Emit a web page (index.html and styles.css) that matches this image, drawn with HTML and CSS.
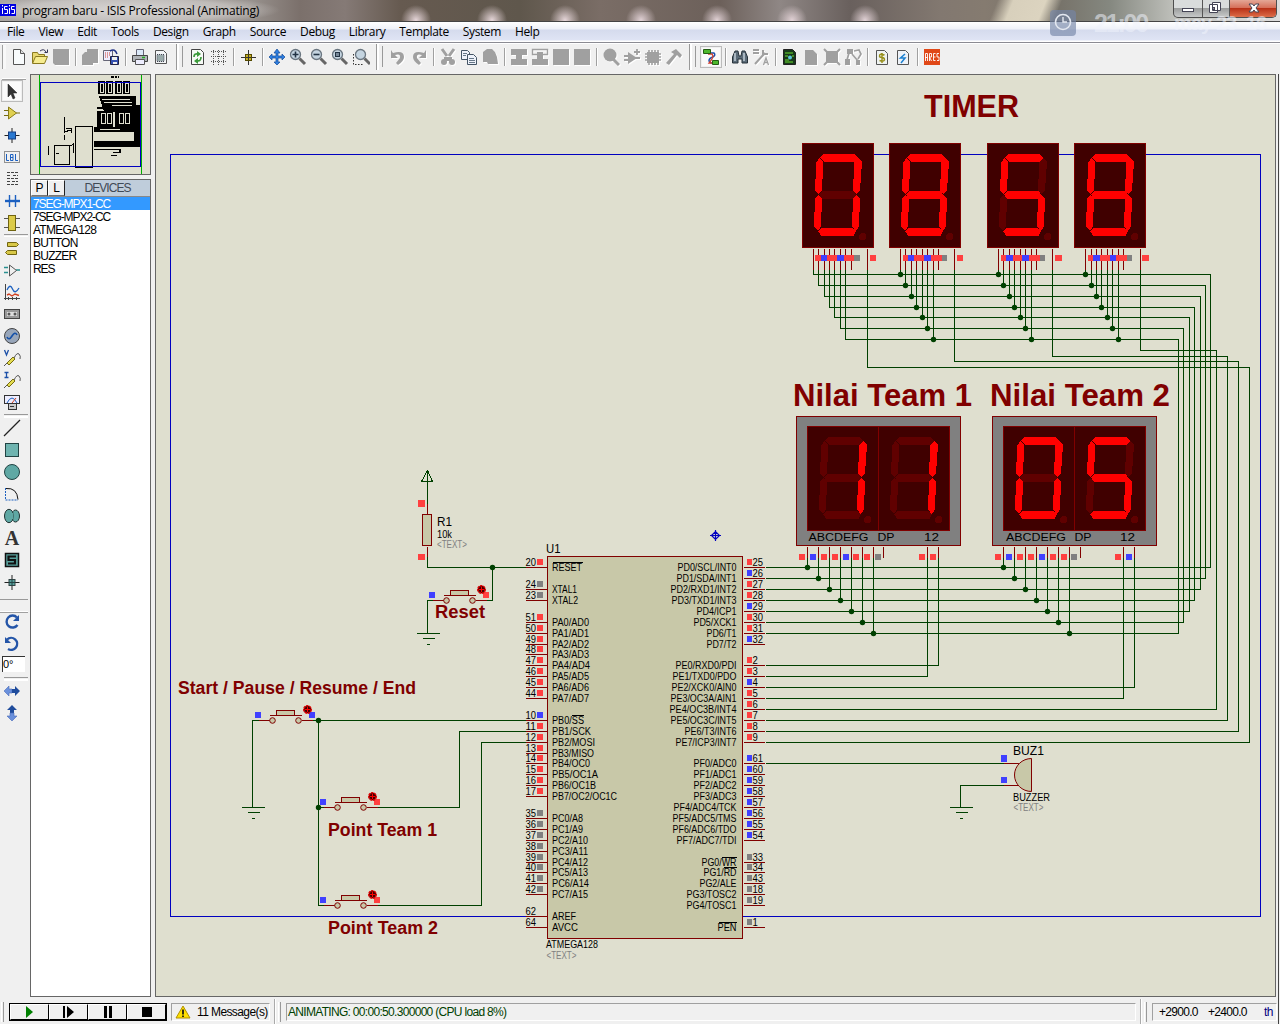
FILE: index.html
```html
<!DOCTYPE html>
<html lang="en">
<head>
<meta charset="utf-8">
<title>program baru - ISIS Professional (Animating)</title>
<link rel="stylesheet" href="styles.css">
</head>
<body>
<div class="window">
  <header class="titlebar">
    <svg class="app-icon" width="16" height="12" viewBox="0 0 16 12"><rect width="16" height="12" fill="#0000e0"/><path d="M2.500 4v6M2.500 1v1.500M7.500 2.500h-3v3h3v4h-3M9.500 4v6M9.500 1v1.500M14.500 2.500h-3v3h3v4h-3" stroke="#fff" fill="none"/></svg>
    <span class="title">program baru - ISIS Professional (Animating)</span>
    <div class="controls">
      <span class="ctl"><svg width="28" height="17"><rect x="8.500" y="8.500" width="11" height="3" fill="#fff" stroke="#445"/></svg></span>
      <span class="ctl"><svg width="26" height="17"><path d="M9.500 2.500h8v8h-8zM6.500 4.500h8v8h-8z" fill="#fff" stroke="#445"/><rect x="9.500" y="7.500" width="2" height="2" fill="#889" stroke="#445"/></svg></span>
      <span class="ctl close"><svg width="46" height="17"><path d="M19 4h3.500l1.500 2 1.500-2H29l-3 4 3 4h-3.500L24 10l-1.500 2H19l3-4z" fill="#fff" stroke="#445"/></svg></span>
    </div>
    <div class="clock">
      <svg width="26" height="26" viewBox="0 0 26 26"><rect width="26" height="26" rx="4" fill="#7486a8" opacity=".65"/><circle cx="13" cy="12" r="7.500" fill="none" stroke="#e4e8f0" stroke-width="1.600"/><path d="M13 7v5h4" fill="none" stroke="#e4e8f0" stroke-width="1.400"/></svg>
      <span class="time">21:00</span><span class="date">may 23&nbsp; 16</span>
    </div>
  </header>

  <nav class="menu"><span>File</span><span>View</span><span>Edit</span><span>Tools</span><span>Design</span><span>Graph</span><span>Source</span><span>Debug</span><span>Library</span><span>Template</span><span>System</span><span>Help</span></nav>

  <div class="toolbar">
    <i class="lead"></i>
    <svg viewBox="0 0 18 18"><path d="M3.500 1.500h7l4 4v11h-11z" fill="#f8fbfc" stroke="#555"/><path d="M10.500 1.500v4h4" fill="#ddd" stroke="#555"/></svg>
    <svg viewBox="0 0 18 18"><path d="M1.500 15V4.500h5l1 2h6V9" fill="#e8d870" stroke="#8a7a20"/><path d="M1.500 15.500l3-7h12l-3 7z" fill="#f6ec90" stroke="#8a7a20"/><path d="M9 3q4-3 6 1M16.500 1.500v3h-3" fill="none" stroke="#335"/></svg>
    <svg viewBox="0 0 18 18" class="off"><path d="M1 1h16v16H3l-2-2z"/></svg>
    <i class="sep"></i>
    <svg viewBox="0 0 18 18" class="off"><path d="M6 1h11v14h-5v2H1V7l3-3h2z"/></svg>
    <svg viewBox="0 0 18 18"><path d="M1.500 2.500h9v10h-9z" fill="#eef" stroke="#667"/><path d="M3 5h5M3 7h5M3 9h4" stroke="#c43" stroke-dasharray="1 1"/><path d="M8 3q5-3 7 3" fill="none" stroke="#238" stroke-width="1.500"/><path d="M8.500 8.500h8v8h-8z" fill="#3450b0" stroke="#224"/><path d="M10 9h5v3h-5zM11 14h4v2h-4z" fill="#eee"/></svg>
    <i class="sep"></i>
    <svg viewBox="0 0 18 18"><path d="M5.500 7V1.500h7V7" fill="#dbe9f8" stroke="#667"/><path d="M1.500 7.500h15v6h-15z" fill="#b0b4b8" stroke="#444"/><path d="M4.500 11.500h9v5h-9z" fill="#eef" stroke="#555"/><path d="M11 9.500h3" stroke="#2a2" stroke-width="1.500"/></svg>
    <svg viewBox="0 0 18 18"><path d="M3.500 2.500h8l3 3v10h-11z" fill="#f4f6f8" stroke="#555"/><path d="M5 6.500h7v7H5z" fill="#9aa" stroke="#445" stroke-dasharray="1 1"/></svg>
    <i class="grip"></i>
    <svg viewBox="0 0 18 18"><path d="M2.500 1.500h9l3 3v12h-12z" fill="#f6faf6" stroke="#444"/><path d="M5 9q0-4 4.500-3M12 9q0 5-4.500 3.500" fill="none" stroke="#3a9a3a" stroke-width="1.700"/><path d="M8 3l4 3-4 3zM9 10v6l-4-3z" fill="#3a9a3a"/></svg>
    <svg viewBox="0 0 18 18"><path d="M1 3.500h16M1 8.500h16M1 13.500h16M3.500 2v15M8.500 2v15M13.500 2v15" stroke="#555" stroke-dasharray="1 1"/></svg>
    <i class="sep"></i>
    <svg viewBox="0 0 18 18"><path d="M9.500 2v15M2 9.500h15" stroke="#333"/><rect x="6.500" y="6.500" width="6" height="6" fill="#c8b020" stroke="#554a00"/><path d="M9.500 7v5M7 9.500h5" stroke="#333"/></svg>
    <i class="sep"></i>
    <svg viewBox="0 0 18 18"><path d="M9 1l3 4h-2v3h4V6l3 3-3 3v-2h-4v4h2l-3 3-3-3h2v-4H4v2L1 9l3-3v2h4V5H6z" fill="#2f7fe0" stroke="#124a9a" stroke-width=".7"/></svg>
    <svg viewBox="0 0 18 18"><use href="#glass"/><path d="M3.500 6.500h6M6.500 3.500v6" stroke="#234" stroke-width="1.600"/></svg>
    <svg viewBox="0 0 18 18"><use href="#glass"/><path d="M3.500 6.500h6" stroke="#234" stroke-width="1.600"/></svg>
    <svg viewBox="0 0 18 18"><use href="#glass"/><rect x="4.500" y="4.500" width="4" height="4" fill="#789" stroke="#234"/></svg>
    <svg viewBox="0 0 18 18"><path d="M1.500 6v10.500h9" fill="none" stroke="#333" stroke-dasharray="1.500 1.500"/><g transform="translate(2)"><use href="#glass"/></g></svg>
    <i class="grip"></i>
    <svg viewBox="0 0 18 18" class="off"><path d="M2 2v8h7L6 7q6-2 5 3l-4 5 2 2q6-4 6-8 0-7-11-4z"/></svg>
    <svg viewBox="0 0 18 18" class="off"><path d="M16 2v8H9l3-3q-6-2-5 3l4 5-2 2q-6-4-6-8 0-7 11-4z"/></svg>
    <i class="sep"></i>
    <svg viewBox="0 0 18 18" class="off"><path d="M3 1l5 7M15 1l-5 7" stroke="#a0a0a0" stroke-width="3"/><path d="M5 9h8v4H5z"/><circle cx="5" cy="14" r="3"/><circle cx="13" cy="14" r="3"/></svg>
    <svg viewBox="0 0 18 18"><path d="M1.500 2.500h6l2 2v7h-8z" fill="#eef2fa" stroke="#456"/><path d="M7.500 6.500h6l3 3v7h-9z" fill="#eef2fa" stroke="#456"/><path d="M3 5.500h4M3 7.500h3M9 10.500h5M9 12.500h6M9 14.500h6" stroke="#678"/></svg>
    <svg viewBox="0 0 18 18" class="off"><path d="M2 4l4-3h5l3 3 2 5 1 7H7l-1-2H2z"/></svg>
    <i class="sep"></i>
    <svg viewBox="0 0 18 18" class="off"><path d="M1 1h16v6h-5v4h5v6H1v-6h5V7H1z"/></svg>
    <svg viewBox="0 0 18 18" class="off"><path d="M1.500 1.500h15v5h-15z" fill="none" stroke="#a0a0a0" stroke-width="1.400"/><path d="M6 4h6v7h5v6H1v-6h5z"/></svg>
    <svg viewBox="0 0 18 18" class="off"><path d="M1 1h16v16H1z"/></svg>
    <svg viewBox="0 0 18 18" class="off"><path d="M1 1h16v16H1z"/></svg>
    <i class="sep"></i>
    <svg viewBox="0 0 18 18" class="off"><circle cx="8" cy="7" r="6.500"/><path d="M11 11l6 6" stroke="#a0a0a0" stroke-width="3"/></svg>
    <svg viewBox="0 0 18 18" class="off"><path d="M5 4l9 6-9 6z"/><path d="M1 8h5M1 12h5M12 10h5M11 4h6M14 1v6" stroke="#a0a0a0" stroke-width="1.800"/></svg>
    <svg viewBox="0 0 18 18" class="off"><path d="M3 4h12v11H3z"/><path d="M1 6h16M1 9h16M1 12h16M5 2v15M8 2v15M11 2v15M14 2v15" stroke="#a0a0a0" stroke-width="1.600"/></svg>
    <svg viewBox="0 0 18 18" class="off"><path d="M6 4l5-3 6 6-2 3-3-3L4 17l-3-2 8-9z"/></svg>
    <i class="grip"></i>
    <svg viewBox="0 0 18 18" class="pressed"><path d="M5 5h7q2 2-1 4-4 1-4 4l2 2h6" fill="none" stroke="#1a50b0" stroke-width="1.500"/><path d="M6 6h4l1 2-1 3-3 4h6" fill="none" stroke="#d04030" stroke-width="1.300"/><path d="M1.500 1.500h7v4h-7zM10.500 12.500h6v4h-6z" fill="#4cb82c" stroke="#245c14"/></svg>
    <i class="sep"></i>
    <svg viewBox="0 0 18 18"><path d="M4 3h3l1 5h2l1-5h3l2.500 6v6h-5.500v-4H7v4H1.500V9z" fill="#5b6b78" stroke="#27323a"/><path d="M4 5v8M13 5v8" stroke="#c4d0d8" stroke-width="1.500"/></svg>
    <svg viewBox="0 0 18 18" class="off"><path d="M1 2h6M1 5h6M3 16L13 5M11 2v4h5" fill="none" stroke="#a0a0a0" stroke-width="2"/><path d="M11.500 17l2.500-7 2.500 7M12 14.500h4" fill="none" stroke="#a0a0a0" stroke-width="1.300"/></svg>
    <i class="sep"></i>
    <svg viewBox="0 0 18 18"><path d="M2.500 1.500h9l3 3v12h-12z" fill="#18391c" stroke="#222"/><path d="M4 5h8M4 8h3M11 8h2M4 12h4M4 14h8" stroke="#6ce030"/><circle cx="9" cy="9.500" r="2" fill="#5cc8d8"/></svg>
    <svg viewBox="0 0 18 18" class="off"><path d="M3 2h8l4 4v11H3z"/></svg>
    <svg viewBox="0 0 18 18" class="off"><path d="M3 3h12v12H3z"/><path d="M1 1l16 16M17 1L1 17" stroke="#a0a0a0" stroke-width="2"/></svg>
    <svg viewBox="0 0 18 18" class="off"><path d="M3 1h6v5H3zM1 11h5v6H1zM12 12h4v5h-4z"/><path d="M5 5L3 12M8 6l6 7M10 3l5-1 2 4-3 5" fill="none" stroke="#a0a0a0" stroke-width="1.700"/></svg>
    <i class="sep"></i>
    <svg viewBox="0 0 18 18"><path d="M3.500 2.500h8l3 3v11h-11z" fill="#eef2f0" stroke="#555"/><path d="M11.500 7q-5-2-5 1 0 1.500 2.500 1.500T11.500 12q-1 2-5 .5M9 5v10" fill="none" stroke="#98901c" stroke-width="1.400"/></svg>
    <svg viewBox="0 0 18 18"><path d="M3.500 2.500h8l3 3v11h-11z" fill="#eef2f8" stroke="#555"/><path d="M11 6l-4.500 4H11l-4 5" fill="none" stroke="#1c80d0" stroke-width="1.500"/></svg>
    <i class="sep"></i>
    <svg viewBox="0 0 18 18"><rect x="1" y="1" width="16" height="16" fill="#e04818"/><path d="M2.500 13V5.500h2V13M2.500 9.500h2M6.500 13V5.500h2V9h-2l2 4M12.500 5.500h-2v7h2M10.500 9h2M16 5.500h-2v3.500h2v3.500h-2" fill="none" stroke="#fff" stroke-width=".9"/></svg>
  </div>

  <main class="work">
    <aside class="modes">
      <i class="vgrip"></i>
      <svg viewBox="0 0 18 18" class="pressed"><path d="M5 2v13l3-3 2 5 2-1-2-5h4z" fill="#333" stroke="#222" stroke-width=".5"/></svg>
      <svg viewBox="0 0 18 18"><path d="M1 6.500h5M1 11.500h5M13 9h4" stroke="#776a10"/><path d="M5.500 3l8 6-8 6z" fill="#e0d050" stroke="#8a7c18"/></svg>
      <svg viewBox="0 0 18 18"><path d="M9 2v15M1.500 9.500h15" stroke="#222"/><rect x="5.500" y="6" width="7" height="7" fill="#2a78d0" stroke="#143c80"/></svg>
      <svg viewBox="0 0 18 18"><rect x="1.500" y="3.500" width="15" height="11" fill="none" stroke="#333" stroke-dasharray="1 1"/><path d="M3.500 6v6.500H6M7.500 12.500v-6H10v6H7.500M7.500 9.500H10M12.500 6v6.500H15" fill="none" stroke="#1c60c0"/></svg>
      <svg viewBox="0 0 18 18"><path d="M4 2.500h11M4 5.500h4M10 5.500h5M4 8.500h11M4 11.500h3M9 11.500h6M4 14.500h11" stroke="#444" stroke-dasharray="3 1"/></svg>
      <svg viewBox="0 0 18 18"><path d="M2 9h15" stroke="#1c60c0" stroke-width="2.400"/><path d="M6.500 3v12M12.500 3v12" stroke="#1c60c0" stroke-width="1.400"/></svg>
      <svg viewBox="0 0 18 18"><path d="M1 4.500h16M1 13.500h16" stroke="#555"/><rect x="5.500" y="1.500" width="7" height="15" fill="#dccb48" stroke="#706410"/></svg>
      <i class="hsep"></i>
      <svg viewBox="0 0 18 18"><path d="M4.500 3.500h9l2 2-2 2h-9zM13.500 11.500h-9l-2 2 2 2h9z" fill="#d8c848" stroke="#706410"/></svg>
      <svg viewBox="0 0 18 18"><path d="M1 6.500h4M1 11.500h4M13 9h4" stroke="#289090" stroke-width="1.400"/><path d="M6.500 4v11l7-5.500z" fill="none" stroke="#555"/></svg>
      <svg viewBox="0 0 18 18"><path d="M2.500 1v16M1 15.500h16M5.500 14v3M9.500 14v3M13.500 14v3" stroke="#444"/><path d="M4 7q3-7 5.500-1t6.500-1" fill="none" stroke="#1c60c0" stroke-width="1.300"/><path d="M4 12l2-1 3 2 3-2 4 1.500" fill="none" stroke="#d04020" stroke-width="1.400"/></svg>
      <svg viewBox="0 0 18 18"><rect x="1.500" y="4.500" width="15" height="9" fill="#999" stroke="#444"/><rect x="4" y="7" width="10" height="4" fill="#ddd"/><circle cx="6" cy="9" r="1.500" fill="#555"/><circle cx="12" cy="9" r="1.500" fill="#555"/></svg>
      <svg viewBox="0 0 18 18"><circle cx="9" cy="9" r="7.500" fill="#98a6ba" stroke="#444"/><path d="M4 10q2 4 5-1t5-1" fill="none" stroke="#1450a8" stroke-width="1.600"/></svg>
      <svg viewBox="0 0 18 18"><use href="#probe"/><path d="M1.500 1l2 5 2-5" fill="none" stroke="#1c50a8" stroke-width="1.300"/></svg>
      <svg viewBox="0 0 18 18"><use href="#probe"/><path d="M1.500 1.500h4M1.500 6.500h4M3.500 1v6" fill="none" stroke="#1c50a8" stroke-width="1.300"/></svg>
      <svg viewBox="0 0 18 18"><rect x="1.500" y="2.500" width="15" height="8" fill="#eef" stroke="#333"/><path d="M4 10q5-10 10 0" fill="none" stroke="#1c60c0"/><path d="M9 10l4-5" stroke="#d04020"/><rect x="5.500" y="10.500" width="8" height="6" fill="#ccc" stroke="#333"/><path d="M7 13.500h4" stroke="#333"/></svg>
      <i class="hsep tall"></i>
      <svg viewBox="0 0 18 18"><path d="M1 17L17 1" stroke="#222" stroke-width="1.300"/></svg>
      <svg viewBox="0 0 18 18"><rect x="2.500" y="2.500" width="13" height="13" fill="#6fb4b0" stroke="#244"/></svg>
      <svg viewBox="0 0 18 18"><circle cx="9" cy="9" r="7.500" fill="#5fa8a4" stroke="#244"/></svg>
      <svg viewBox="0 0 18 18"><path d="M2.500 3v12H15" fill="none" stroke="#1c60c0" stroke-dasharray="2 1"/><path d="M3 3.500q11-1 12 11" fill="none" stroke="#111"/></svg>
      <svg viewBox="0 0 18 18"><ellipse cx="12.500" cy="9" rx="4" ry="6" fill="#5fa8a4" stroke="#233"/><ellipse cx="6" cy="9" rx="4.500" ry="6.700" fill="#5fa8a4" stroke="#233"/><path d="M9 6v6" stroke="#5fa8a4" stroke-width="3"/></svg>
      <span class="letter">A</span>
      <svg viewBox="0 0 18 18"><rect x="2.500" y="2.500" width="13" height="13" fill="#58a09c" stroke="#111" stroke-width="1.500"/><path d="M13 5.500H5.500V9H12v3.500H5" fill="none" stroke="#111" stroke-width="2.200"/></svg>
      <svg viewBox="0 0 18 18"><path d="M9 2v15M1.500 9.500h15" stroke="#222"/><rect x="6" y="6.500" width="6" height="6" fill="#58a09c" stroke="#344"/><path d="M9 6v7M6 9.500h6" stroke="#244"/></svg>
      <i class="vgrip second"></i>
      <svg viewBox="0 0 18 18"><path d="M14 4.500A6 6 0 1 0 14.500 12" fill="none" stroke="#2455a8" stroke-width="2.400"/><path d="M16 2v6h-6z" fill="#2455a8"/></svg>
      <svg viewBox="0 0 18 18"><path d="M4 4.500A6 6 0 1 1 5 14" fill="none" stroke="#2455a8" stroke-width="2.400"/><path d="M2 2v6h6z" fill="#2455a8"/></svg>
      <span class="angle">0°</span>
      <i class="hsep tall"></i>
      <svg viewBox="0 0 18 18"><path d="M1 9l5-5v3h3v4H6v3z" fill="#6a90dc" stroke="#4a6cb8" stroke-width=".6"/><path d="M17 9l-5-5v3H9v4h3v3z" fill="#1f4c9c"/></svg>
      <svg viewBox="0 0 18 18"><path d="M9 1l5 5h-3v3H7V6H4z" fill="#1f4c9c"/><path d="M9 17l5-5h-3V9H7v3H4z" fill="#6a90dc" stroke="#4a6cb8" stroke-width=".6"/></svg>
    </aside>

    <section class="side">
      <svg class="overview" width="119" height="99" viewBox="31 75 119 99" shape-rendering="crispEdges">
        <path d="M39.500 75v99M141.500 75v99" stroke="#00b000"/>
        <path d="M111 76h3v2h-3zM115 76h2v2h-2zM118 76h1v2h-1zM98 81h7v13h-7zM106 81h7v13h-7zM115 81h7v13h-7zM123 81h7v13h-7zM99 96h37v9h4v42H94v-6h40v-9H94v-5h36v-15h-26z"/>
        <path d="M97 111h16v16H97zM115 111h17v16h-17zM97 107h16v2H97zM115 107h16v2h-16z"/>
        <path d="M100 83h3v9h-3zM108 83h3v9h-3zM117 83h3v9h-3zM125 83h3v9h-3zM101 113h4v10h-4zM107 113h4v10h-4zM119 113h4v10h-4zM125 113h4v10h-4z" fill="none" stroke="#dfdfcf"/>
        <path d="M102 99h28M104 102h28M112 105h20M100 129h20M96 134h30M98 138h32" stroke="#dfdfcf"/>
        <path d="M94 149.500h26v3M111 155h6M113 152h6v-3M64.500 117v15l6-2M64 135v5M48.500 146v9M54 145h18l1-1v9M54.500 145v19h15v-19M56 153h3M66 128h5v5" fill="none" stroke="#000"/>
        <rect x="75.500" y="126.500" width="17" height="41" fill="#dfdfcf" stroke="#000"/>
        <rect x="40.500" y="82.500" width="100" height="84" fill="none" stroke="#0000c0"/>
      </svg>
      <div class="devices">
        <div class="dev-head"><b>P</b><b>L</b><span>DEVICES</span></div>
        <div class="row selected">7SEG-MPX1-CC</div>
        <div class="row">7SEG-MPX2-CC</div>
        <div class="row">ATMEGA128</div>
        <div class="row wide">BUTTON</div>
        <div class="row wide">BUZZER</div>
        <div class="row">RES</div>
      </div>
    </section>

    <svg id="sheet" class="sheet" width="1119" height="921" viewBox="156 75 1119 921"></svg>
    <i class="edge"></i>
  </main>

  <footer class="status">
    <i class="grip-s"></i>
    <div class="sim">
      <b><svg width="10" height="12"><path d="M1 0l7 6-7 6z" fill="#008000"/></svg></b>
      <b><svg width="13" height="12"><path d="M1 0h2v12H1zM5 0l7 6-7 6z"/></svg></b>
      <b><svg width="10" height="12"><path d="M1 0h3v12H1zM6 0h3v12H6z"/></svg></b>
      <b><svg width="10" height="12"><path d="M0 1h10v10H0z"/></svg></b>
    </div>
    <div class="field messages"><svg width="16" height="14" viewBox="0 0 16 14"><path d="M8 1l7 12H1z" fill="#ffe000" stroke="#b09000"/><path d="M8 4.500v5M8 10.500v1.500" stroke="#111" stroke-width="1.700"/></svg><span>11 Message(s)</span></div>
    <i class="bar"></i><i class="grip-s"></i>
    <div class="field state">ANIMATING: 00:00:50.300000 (CPU load 8%)</div>
    <i class="bar"></i><i class="grip-s"></i>
    <div class="field coords"><span>+2900.0</span><span>+2400.0</span><em>th</em></div>
  </footer>
</div>

<svg class="defs" width="0" height="0">
  <defs>
    <g id="glass"><path d="M10.500 10.500l5.500 5.500" stroke="#666" stroke-width="3"/><circle cx="6.500" cy="6.500" r="5" fill="#c4d4e0" stroke="#6a7680" stroke-width="1.300"/></g>
    <g id="probe"><path d="M1 17l4-4" stroke="#555"/><path d="M4 14l6-6 2 2-6 6z" fill="#e4dc50" stroke="#776c10"/><path d="M11 9q3-6 5-4t1 5" fill="none" stroke="#555"/></g>
  </defs>
</svg>
<script src="schematic.js"></script>
</body>
</html>
```
FILE: styles.css
```css
* { box-sizing: border-box; }
body { margin: 0; width: 1280px; height: 1024px; overflow: hidden; background: #f0f0f0; font-family: "Liberation Sans", Arial, sans-serif; }
.window { position: relative; width: 1280px; height: 1024px; display: flex; flex-direction: column; }
.defs { position: absolute; }

.titlebar {
  height: 22px; flex: none; display: flex; align-items: center; border-bottom: 1px solid #444;
  background:
    radial-gradient(ellipse 150px 16px at 130px 10px, rgba(235,233,232,.75), rgba(235,233,232,.45) 70%, transparent),
    radial-gradient(circle at 416px 20px, #e5d5d8 0, transparent 15px),
    radial-gradient(circle at 492px 20px, #e5d5d8 0, transparent 15px),
    radial-gradient(circle at 565px 20px, #e5d5d8 0, transparent 15px),
    radial-gradient(circle at 641px 20px, #e0d0d4 0, transparent 15px),
    radial-gradient(circle at 717px 20px, #e0d0d4 0, transparent 15px),
    radial-gradient(circle at 792px 20px, #e0d0d4 0, transparent 15px),
    radial-gradient(circle at 865px 20px, #e0d0d4 0, transparent 15px),
    linear-gradient(112deg, transparent 925px, #d8d0bc 940px, #dcd4c0 970px, transparent 985px),
    linear-gradient(90deg, #a9a5a2 0, #98928e 250px, #7b706b 300px, #857a76 345px, #665a50 400px, #5f574c 520px, #7a6d66 600px, #6c605a 720px, #8f8785 780px, #69605d 850px, #827870 940px, #857b70 985px, #77736a 1060px, #858880 1110px, #c4c5c0 1180px, #ddd 1280px);
}
.app-icon { flex: none; margin-top: -1px; }
.title { font: 12px "Open Sans", "Noto Sans", sans-serif; letter-spacing: -.23px; margin-left: 6px; color: #000; white-space: nowrap; }
.controls { margin: 0 3px 4px auto; height: 18px; display: flex; border: 1px solid #4e4e4e; border-top: 0; border-radius: 0 0 5px 5px; overflow: hidden; background: linear-gradient(#d9dcdc 45%, #9c9e9e 50%, #c7c9c9); }
.ctl { display: block; border-right: 1px solid #555; height: 17px; }
.ctl svg { display: block; }
.ctl.close { border: 0; background: linear-gradient(#e4a796 0, #d6705a 45%, #b93218 50%, #dd6c48); }
.clock { position: absolute; left: 1050px; top: 10px; display: flex; align-items: flex-start; color: rgba(240,243,252,.55); font-family: "Liberation Sans", sans-serif; font-weight: bold; white-space: nowrap; }
.time { font-size: 25px; line-height: 27px; margin-left: 18px; width: 80px; letter-spacing: -2.2px; }
.date { font-size: 20px; line-height: 26px; letter-spacing: -.9px; }

.menu { height: 21px; flex: none; display: flex; gap: 14px; padding-left: 7px; border-bottom: 1px solid #8b8b93; background: linear-gradient(#fff 0, #eef1f8 7px, #d5dbed 8px, #dfe4f4 18px, #fff 19px); font: 12px/19px "Open Sans", "Noto Sans", sans-serif; letter-spacing: -.38px; }

.toolbar { height: 31px; flex: none; display: flex; align-items: center; padding-bottom: 4px; border-top: 1px solid #fff; }
.toolbar > svg { width: 18px; height: 18px; margin: 0 1.515px; flex: none; }
.off { fill: #a0a0a0; filter: drop-shadow(1px 1px 0 #fff); }
.lead { width: 7.500px; height: 24px; border-right: 3px solid #f8f8f8; box-shadow: inset -1px 0 #a0a0a0; margin-left: -2px; margin-right: 2.800px; }
.sep { width: 8px; flex: none; height: 18px; background: linear-gradient(#a0a0a0, #a0a0a0) 4px 0 / 1px 100% no-repeat, linear-gradient(#fff, #fff) 5px 0 / 1px 100% no-repeat; }
.grip { width: 16px; flex: none; height: 26px; background: linear-gradient(#999, #999) 5px 0 / 1px 100% no-repeat, linear-gradient(#fff, #fff) 6px 0 / 2px 100% no-repeat, linear-gradient(#999, #999) 11px 2px / 1px 21px no-repeat; }
.pressed { background: #fafafa; outline: 1px solid #bbb; outline-offset: 1px; }

.work { height: 924px; flex: none; display: flex; }
.modes { width: 30px; padding-left: 3px; display: flex; flex-direction: column; }
.modes > svg { width: 18px; height: 18px; margin: 2px 0; flex: none; }
.vgrip { height: 6px; margin: 0 4px 0 -1px; border-bottom: 1px solid #a0a0a0; flex: none; box-shadow: inset 0 -1px #fff; }
.vgrip.second { height: 14px; margin: 6px 2px -2px -3px; border-top: 1px solid #999; }
.hsep { height: 3px; margin: 0 2px 0 1px; border-top: 1px solid #999; border-bottom: 1px solid #fff; flex: none; }
.hsep.tall { height: 4px; margin-top: 1px; margin-bottom: -1px; border-bottom-width: 2px; }
.letter { height: 22px; width: 18px; flex: none; text-align: center; font: bold 20px/22px "Liberation Serif", serif; color: #333; }
.angle { height: 16px; width: 23px; margin: 1px 0 4px -1px; flex: none; background: #fff; border-top: 1px solid #333; border-left: 1px solid #333; font-size: 11px; line-height: 15px; }

.side { width: 121px; margin-right: 4px; display: flex; flex-direction: column; gap: 4px; }
.side, .sheet { flex: none; height: 923px; }
.overview { box-sizing: content-box; border: 1px solid #666; background: #dfdfcf; flex: none; }
.devices { flex: 1; border: 1px solid #666; background: #fff; }
.dev-head { height: 17px; display: flex; background: #bfcddb; border-bottom: 1px solid #888; font-size: 12px; line-height: 15px; }
.dev-head b { width: 17px; font-weight: normal; text-align: center; background: #f0f0f0; border: 1px solid #fff; border-right: 1px solid #222; border-bottom: 1px solid #777; line-height: 14px; }
.dev-head span { flex: 1; text-align: center; color: #3f4a56; letter-spacing: -.95px; line-height: 16px; }
.row { height: 13px; padding-left: 2px; font-size: 12px; line-height: 14px; letter-spacing: -1.08px; white-space: nowrap; }
.row:nth-child(4) { letter-spacing: -.75px; }
.row.wide { letter-spacing: -.75px; }
.row.selected { background: #3399ff; color: #fff; }
.sheet { box-sizing: content-box; width: 1119px; height: 921px; border: 1px solid #666; background: #dfdfcf; }
.edge { width: 3px; margin-left: 0; border-right: 1px solid #444; background: #f0f0f0; height: 950px; }

.status { flex: 1; display: flex; align-items: center; padding-top: 1px; font-size: 12px; letter-spacing: -.6px; }
.grip-s { width: 3px; height: 20px; border-right: 1px solid #999; border-left: 1px solid #fff; margin: 0 5px 0 1px; flex: none; }
.sim { width: 158px; height: 18px; display: flex; border: 1px solid #000; margin-right: 4px; flex: none; }
.sim b { flex: 1; display: flex; align-items: center; justify-content: center; border: 1px solid #000; border-top-color: #fff; border-left-color: #fff; background: #f0f0f0; }
.field { height: 18px; border: 1px solid #a0a0a0; border-right-color: #fff; border-bottom-color: #fff; display: flex; align-items: center; flex: none; white-space: nowrap; }
.messages { width: 99px; padding-left: 3px; gap: 6px; }
.bar { width: 2px; height: 26px; background: #aaa; border-right: 1px solid #fff; margin-left: 4px; margin-right: 1px; flex: none; }
.state { width: 850px; color: #004000; padding-left: 1px; letter-spacing: -.69px; }
.coords { width: 125px; padding-left: 6px; letter-spacing: -.7px; }
.coords span { width: 49px; }
.coords em { font-style: normal; color: #000080; margin-left: 7px; }

/* schematic */
.wire, .pin, .frame { fill: none; shape-rendering: crispEdges; }
.wire { stroke: #004000; }
.pin { stroke: #800000; }
.frame { stroke: #0000c0; }
.dot { fill: #004000; }
.part { fill: #c8c8a8; stroke: #800000; }
.crisp { shape-rendering: crispEdges; }
.case { fill: #808080; stroke: #800000; shape-rendering: crispEdges; }
.face { fill: #400000; stroke: #800000; shape-rendering: crispEdges; }
.seg { fill: #600000; shape-rendering: crispEdges; }
.seg.on { fill: #ff0000; }
.R { fill: #ff4040; } .B { fill: #4040ff; } .G { fill: #808080; }
.lbl { font-size: 10px; fill: #000; }
.lbl.mute { fill: #808080; }
.ref { font-size: 13.500px; fill: #000; }
.head { font-weight: bold; font-size: 31.500px; fill: #800000; }
.head.small { font-size: 17.500px; }
.over { stroke: #000; fill: none; shape-rendering: crispEdges; }
```
FILE: schematic.js
```js
const out = [];
const add = s => out.push(s);
// Strokes are centred on pixels, so wires and pins sit in a half-pixel group.
const line = (cls, d) => add(`<path class="${cls}" transform="translate(.5 .5)" d="${d}"/>`);
const sq = (c, x, y, w = 6, h = 6) => add(`<rect class="${c} crisp" x="${x}" y="${y}" width="${w}" height="${h}"/>`);
const text = (cls, s, x, y, w, anchor = 'start') =>
  add(`<text class="${cls}" x="${x}" y="${y}" text-anchor="${anchor}"${w ? ` textLength="${w}" lengthAdjust="spacingAndGlyphs"` : ''}>${s.replace(/</g, '&lt;')}</text>`);
const dot = (x, y) => add(`<circle class="dot" cx="${x + .5}" cy="${y + .5}" r="2.7"/>`);

line('frame', 'M170 154H1260V916H170Z');

// ---- seven segment digits ----
const SEG = {
  a: '54,45 66,32 157,32 169,45 157,58 69,58',
  b: '168,45 180,57 174,141 164,153 153,141 157,57',
  c: '164,157 174,168 171,251 161,264 150,251 153,168',
  d: '48,266 59,254 150,254 161,266 154,279 59,279',
  e: '50,157 60,168 57,251 48,264 36,251 39,168',
  f: '53,45 64,58 60,141 50,153 39,141 43,57',
  g: '51,155 62,143 153,143 163,155 150,169 62,169'
};
const DIGIT = { 0: 'abcdef', 1: 'bc', 5: 'acdfg', 8: 'abcdefg' };
function digit(x, y, n) {
  add(`<rect class="face" x="${x + .5}" y="${y + .5}" width="71" height="104"/><g transform="translate(${x} ${y}) scale(.33333)">`);
  for (const k in SEG) add(`<polygon class="seg${DIGIT[n].includes(k) ? ' on' : ''}" points="${SEG[k]}"/>`);
  add('<circle class="seg" cx="182" cy="281" r="11"/></g>');
}

// ---- timer displays ----
const busY = [274, 285, 296, 307, 317, 328, 339];
const busX = [1210, 1205, 1200, 1194, 1189, 1183, 1178];
const pdY = [567, 578, 589, 600, 611, 622, 633];
const timer = [
  { x: 802, n: 0, p: [813, 818, 824, 829, 834, 840, 845], dp: 851, com: 867, s: [815, 821, 827, 837, 844, 854, 860], r: 870, w: 6 },
  { x: 889, n: 8, p: [900, 905, 911, 916, 922, 927, 933], dp: 938, com: 954, s: [903, 908, 914, 924, 931, 942, 947], r: 957, w: 6 },
  { x: 987, n: 5, p: [998, 1003, 1009, 1014, 1020, 1025, 1031], dp: 1036, com: 1052, s: [1001, 1006, 1013, 1022, 1029, 1040, 1045], r: 1055, w: 7 },
  { x: 1074, n: 8, p: [1085, 1091, 1096, 1101, 1107, 1112, 1118], dp: 1123, com: 1140, s: [1088, 1093, 1100, 1110, 1116, 1127, 1132], r: 1142, w: 7 }
];
const comY = [367, 361, 356, 350], comX = [1249, 1238, 1227, 1216], comPin = [742, 731, 720, 709];
busY.forEach((y, i) => line('wire', `M${timer[0].p[i]} ${y}H${busX[i]}V${pdY[i]}H765`));
timer.forEach((t, k) => {
  t.p.forEach((x, i) => {
    line('wire', `M${x} 269V${busY[i]}`);
    line('pin', `M${x} 248V269`);
    if (k) dot(x, busY[i]);
  });
  line('pin', `M${t.dp} 248V269M${t.com} 248V269`);
  line('wire', `M${t.com} 269V${comY[k]}H${comX[k]}V${comPin[k]}H765`);
  ['R', 'B', 'R', 'B', 'R', 'G'].forEach((c, i) => sq(c, t.s[i], 255, t.s[i + 1] - t.s[i]));
  sq('R', t.r, 255, t.w);
  digit(t.x, 143, t.n);
});

// ---- team score displays ----
const teams = [
  { x: 796, n: [1, 1], p: [807, 818, 829, 840, 851, 862, 873], dp: 883, c: [927, 938], cy: [676, 665], s: [799, 810, 821, 832, 843, 853, 864, 875, 919, 930], col: 'RBRRBRRGRR', t: [808.500, 877.500, 924] },
  { x: 992, n: [0, 5], p: [1003, 1014, 1025, 1036, 1047, 1058, 1069], dp: 1080, c: [1123, 1134], cy: [698, 687], s: [995, 1006, 1017, 1028, 1039, 1050, 1061, 1071, 1115, 1126], col: 'RBRRBRRGRB', t: [1006, 1074.500, 1120] }
];
teams.forEach(t => {
  add(`<rect class="case" x="${t.x + .5}" y="416.500" width="164" height="129"/>`);
  digit(t.x + 11, 426, t.n[0]);
  digit(t.x + 82, 426, t.n[1]);
  t.p.forEach((x, i) => { line('wire', `M${x} 557V${pdY[i]}`); line('pin', `M${x} 546V557`); dot(x, pdY[i]); });
  line('pin', `M${t.dp} 546V557`);
  t.c.forEach((x, i) => { line('wire', `M${x} 557V${t.cy[i]}H765`); line('pin', `M${x} 546V557`); });
  t.s.forEach((x, i) => sq(t.col[i], x, 554));
  text('lbl', 'ABCDEFG', t.t[0], 541, 60);
  text('lbl', 'DP', t.t[1], 541, 17);
  text('lbl', '12', t.t[2], 541, 15);
});

// ---- microcontroller: [pin, y, label, label width, state] ----
add('<rect class="part crisp" x="547.500" y="556.500" width="195" height="382"/>');
const left = [
  [20, 567, 'RESET', 30, 'R'], [24, 589, 'XTAL1', 25, 'G'], [23, 600, 'XTAL2', 26, 'G'],
  [51, 622, 'PA0/AD0', 37, 'R'], [50, 633, 'PA1/AD1', 37, 'R'], [49, 644, 'PA2/AD2', 37, 'R'], [48, 654, 'PA3/AD3', 37, 'R'],
  [47, 665, 'PA4/AD4', 38, 'R'], [46, 676, 'PA5/AD5', 37, 'R'], [45, 687, 'PA6/AD6', 37, 'R'], [44, 698, 'PA7/AD7', 37, 'R'],
  [10, 720, 'PB0/SS', 32, 'B'], [11, 731, 'PB1/SCK', 39, 'R'], [12, 742, 'PB2/MOSI', 43, 'R'], [13, 753, 'PB3/MISO', 42, 'R'],
  [14, 763, 'PB4/OC0', 38, 'R'], [15, 774, 'PB5/OC1A', 46, 'R'], [16, 785, 'PB6/OC1B', 44, 'R'], [17, 796, 'PB7/OC2/OC1C', 65, 'R'],
  [35, 818, 'PC0/A8', 31, 'G'], [36, 829, 'PC1/A9', 31, 'G'], [37, 840, 'PC2/A10', 36, 'G'], [38, 851, 'PC3/A11', 36, 'G'],
  [39, 862, 'PC4/A12', 36, 'G'], [40, 872, 'PC5/A13', 36, 'G'], [41, 883, 'PC6/A14', 37, 'G'], [42, 894, 'PC7/A15', 36, 'G'],
  [62, 916, 'AREF', 24, ''], [64, 927, 'AVCC', 26, '']
];
const right = [
  [25, 567, 'PD0/SCL/INT0', 59, 'R'], [26, 578, 'PD1/SDA/INT1', 60, 'B'], [27, 589, 'PD2/RXD1/INT2', 66, 'R'], [28, 600, 'PD3/TXD1/INT3', 65, 'R'],
  [29, 611, 'PD4/ICP1', 40, 'B'], [30, 622, 'PD5/XCK1', 43, 'R'], [31, 633, 'PD6/T1', 30, 'R'], [32, 644, 'PD7/T2', 30, 'B'],
  [2, 665, 'PE0/RXD0/PDI', 61, 'R'], [3, 676, 'PE1/TXD0/PDO', 64, 'R'], [4, 687, 'PE2/XCK0/AIN0', 65, 'B'], [5, 698, 'PE3/OC3A/AIN1', 66, 'R'],
  [6, 709, 'PE4/OC3B/INT4', 67, 'R'], [7, 720, 'PE5/OC3C/INT5', 66, 'R'], [8, 731, 'PE6/T3/INT6', 52, 'R'], [9, 742, 'PE7/ICP3/INT7', 61, 'R'],
  [61, 763, 'PF0/ADC0', 43, 'B'], [60, 774, 'PF1/ADC1', 43, 'B'], [59, 785, 'PF2/ADC2', 43, 'B'], [58, 796, 'PF3/ADC3', 43, 'B'],
  [57, 807, 'PF4/ADC4/TCK', 63, 'B'], [56, 818, 'PF5/ADC5/TMS', 64, 'B'], [55, 829, 'PF6/ADC6/TDO', 64, 'B'], [54, 840, 'PF7/ADC7/TDI', 60, 'B'],
  [33, 862, 'PG0/WR', 35, 'G'], [34, 872, 'PG1/RD', 33, 'G'], [43, 883, 'PG2/ALE', 37, 'G'], [18, 894, 'PG3/TOSC2', 50, 'G'], [19, 905, 'PG4/TOSC1', 50, 'G'],
  [1, 927, 'PEN', 19, 'G']
];
left.forEach(([n, y, s, w, c]) => {
  line('pin', `M525 ${y}H547`);
  text('lbl', String(n), 525.500, y - 1, 10.500);
  text('lbl', s, 552, y + 4, w);
  if (c) sq(c, 537, y - 8, 6, 6);
});
right.forEach(([n, y, s, w, c]) => {
  line('pin', `M743 ${y}H764`);
  text('lbl', String(n), 752.500, y - 1, n > 9 ? 10.500 : 5.300);
  text('lbl', s, 736.500 - w, y + 4, w);
  sq(c, 747, y - 8, 5, 6);
});
line('over', 'M552 562H582M571 715H583M721 857H736M723 867H736M718 922H736');
text('ref', 'U1', 546, 553, 14.500);
text('lbl', 'ATMEGA128', 546, 948, 52);
text('lbl mute', '<TEXT>', 546.500, 959, 30);

// ---- push buttons ----
function button(x, y, sl, sr) {
  line('pin', `M${x - 14} ${y}H${x - 3}M${x + 29} ${y}H${x + 40}M${x - 3} ${y - 5}H${x + 29}`);
  add(`<rect class="part crisp" x="${x + 4.5}" y="${y - 9.5}" width="18" height="5"/>`);
  [0, 26].forEach(d => add(`<circle class="part" cx="${x + d + .5}" cy="${y + .5}" r="2.8"/>`));
  sq(sl, x - 17, y - 8); sq(sr, x + 37, y - 8);
  add(`<circle cx="${x + 35.5}" cy="${y - 10.5}" r="3.700" fill="#400000" stroke="#e00000" stroke-width="1.600" stroke-dasharray="2.400 .7"/><path d="M${x + 33} ${y - 10.5}h5M${x + 35.5} ${y - 13}v5" stroke="#ff0000"/>`);
}
const ground = (x, y) => line('wire', `M${x - 11} ${y}H${x + 12}M${x - 5} ${y + 5}H${x + 7}M${x - 1} ${y + 11}H${x + 2}`);

line('wire', 'M427 503V470L421 481H432L427 470M427 556V567H525M492 567V600H486M432 600H427V633');
line('pin', 'M427 503V514M427 546V556');
add('<rect class="part crisp" x="422.500" y="514.500" width="9" height="31"/>');
sq('R', 418, 500, 7, 7); sq('R', 418, 554, 7, 6);
text('ref', 'R1', 437, 526, 15); text('lbl', '10k', 437, 538, 15); text('lbl mute', '<TEXT>', 437, 548, 30);
dot(492, 567);
ground(427, 633);
button(446, 600, 'B', 'R');

line('wire', 'M258 720H252V807M312 720H525M318 720V905H323M318 807H323M376 807H459V731H525M376 905H481V742H525');
dot(318, 720); dot(318, 807);
ground(252, 807);
button(272, 720, 'B', 'B');
button(337, 807, 'B', 'R');
button(337, 905, 'B', 'R');

// ---- buzzer ----
line('wire', 'M765 763H1003M1003 785H960V807');
line('pin', 'M1003 763H1019M1003 785H1019');
ground(960, 807);
add('<path class="part" d="M1031.500 758.500V791.500A17 16.500 0 0 1 1031.500 758.500Z"/>');
sq('B', 1001, 755, 6, 7); sq('B', 1001, 777);
text('ref', 'BUZ1', 1013, 755, 31); text('lbl', 'BUZZER', 1013, 801, 37); text('lbl mute', '<TEXT>', 1013.500, 811, 30);

// ---- origin marker ----
add('<path d="M715.500 530v11M710 535.500h11M711.500 535.500l4-4 4 4-4 4z" fill="none" stroke="#0000c0" stroke-width="1.200"/>');

// ---- captions ----
text('head', 'TIMER', 924, 117, 95);
text('head', 'Nilai Team 1', 793, 406, 179);
text('head', 'Nilai Team 2', 990, 406, 180);
text('head small', 'Start / Pause / Resume / End', 178, 694, 238);
text('head small', 'Point Team 1', 328, 836, 109);
text('head small', 'Point Team 2', 328, 934, 110);
text('head small', 'Reset', 435, 618, 50);

document.getElementById('sheet').innerHTML = out.join('');
```
